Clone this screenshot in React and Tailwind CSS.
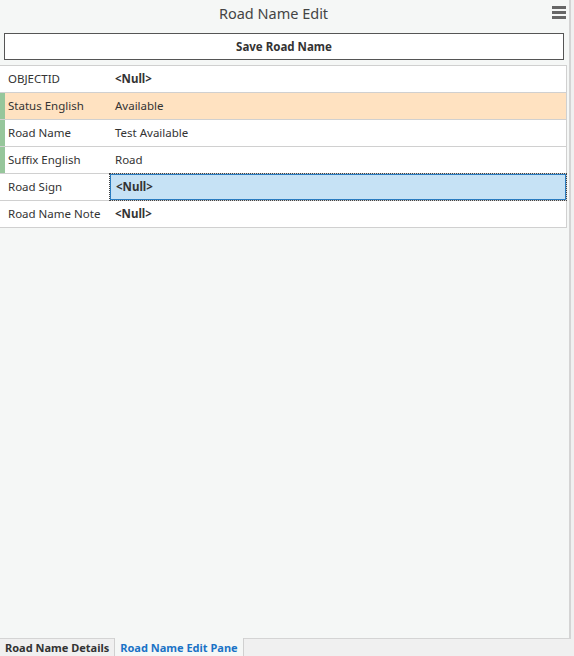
import React from "react";

const rows = [
  { label: "OBJECTID", value: "<Null>", isNull: true },
  { label: "Status English", value: "Available", edited: true, highlight: true },
  { label: "Road Name", value: "Test Available", edited: true },
  { label: "Suffix English", value: "Road", edited: true },
  { label: "Road Sign", value: "<Null>", isNull: true, selected: true },
  { label: "Road Name Note", value: "<Null>", isNull: true },
];

function Row({ row }) {
  return (
    <div
      className={`flex h-[27px] border-b border-[#d0d0d0] ${
        row.highlight ? "bg-[#ffe2c1]" : "bg-white"
      }`}
    >
      <div className="relative flex w-[110px] items-center pl-2 text-[11.5px] text-[#333]">
        {row.edited && (
          <div className="absolute left-0 top-0 h-full w-[5px] bg-[#96c69b]" />
        )}
        <span className="relative">{row.label}</span>
      </div>
      {row.selected ? (
        <div className="flex flex-1 items-center border border-[#2a7cc0] bg-[#c6e2f5] pl-[5px] outline-1 outline-dotted outline-[#444] text-[11.5px]">
          <span className="font-bold text-[#333]">{row.value}</span>
        </div>
      ) : (
        <div className="flex flex-1 items-center pl-[5px] text-[11.5px] text-[#333]">
          <span className={row.isNull ? "font-bold" : ""}>{row.value}</span>
        </div>
      )}
    </div>
  );
}

export default function App() {
  return (
    <div
      className="flex h-[656px] w-[574px] flex-col bg-[#f0f0f0]"
      style={{ fontFamily: '"Noto Sans", "Open Sans", sans-serif' }}
    >
      <div className="flex flex-1 flex-col border-r-[2px] border-b border-[#d4d4d4] bg-[#f5f7f6] w-[571px]">
        <div className="relative flex h-[28px] items-center justify-center pr-[22px]">
          <span className="text-[14.5px] text-[#444]">Road Name Edit</span>
          <div className="absolute right-[3px] top-[6px] flex flex-col gap-[2px]">
            <div className="h-[3px] w-[14px] bg-[#666]" />
            <div className="h-[3px] w-[14px] bg-[#666]" />
            <div className="h-[3px] w-[14px] bg-[#666]" />
          </div>
        </div>
        <div className="px-[4px] pt-[5px]">
          <button className="flex h-[27px] w-[560px] items-center justify-center border border-[#555] bg-white text-[11.5px] font-bold text-[#333]">
            Save Road Name
          </button>
        </div>
        <div className="mt-[5px] w-[567px] border-t border-r border-[#d0d0d0]">
          {rows.map((r) => (
            <Row key={r.label} row={r} />
          ))}
        </div>
      </div>
      <div className="flex h-[17px] items-end text-[11px] font-bold">
        <div className="flex h-[17px] items-center px-[5px] pt-[2px] text-[#333]">
          Road Name Details
        </div>
        <div className="-mt-px flex h-[18px] items-center border-x border-[#d0d0d0] bg-[#f5f7f6] px-[5px] pt-[2px] text-[#1a73c6]">
          Road Name Edit Pane
        </div>
      </div>
    </div>
  );
}
